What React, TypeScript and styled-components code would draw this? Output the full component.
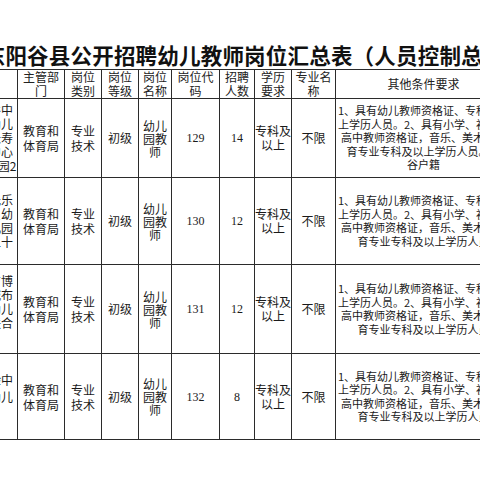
import React from 'react';
import styled, { createGlobalStyle } from 'styled-components';

/***** STYLES *****/
const GlobalStyle = createGlobalStyle`
    html, body {
        margin: 0;
        padding: 0;
        background: #ffffff;
        overflow: hidden;
    }
`;

const Page = styled.div`
    width: 480px;
    height: 480px;
    padding-top: 44px;
    box-sizing: border-box;
    overflow: hidden;
    font-family: "Noto Sans CJK SC", "Liberation Sans", sans-serif;
    color: #1a1a1a;
`;

const Title = styled.h1`
    margin: 0 0 4px -38px;
    font-size: 21.5px;
    line-height: 21px;
    letter-spacing: 0.2px;
    font-weight: 700;
    white-space: nowrap;
    color: #111;
`;

const Sheet = styled.table`
    margin-left: -28px;
    width: 539px;
    border-collapse: collapse;
    table-layout: fixed;
`;

const Row = styled.tr<{ $h: number }>`
    height: ${(p) => p.$h}px;
`;

const HeadCell = styled.th`
    border: 1px solid #2b2b2b;
    padding: 0;
    font-size: 12px;
    line-height: 14px;
    font-weight: 400;
    text-align: center;
    vertical-align: middle;
    color: #222;
`;

const Cell = styled.td<{ $lh?: number; $serif?: boolean; $size?: number }>`
    border: 1px solid #2b2b2b;
    padding: 0;
    font-size: ${(p) => p.$size || 12}px;
    line-height: ${(p) => p.$lh || 14}px;
    font-family: ${(p) => (p.$serif ? '"Liberation Serif", serif' : 'inherit')};
    text-align: center;
    vertical-align: middle;
    white-space: nowrap;
    overflow: hidden;
`;

const Line = styled.div`
    display: block;
`;

/***** DATA *****/
const widths = [45, 47, 37, 37, 33, 48, 35, 37, 44, 176];

const heads = [
    [''],
    ['主管部', '门'],
    ['岗位', '类别'],
    ['岗位', '等级'],
    ['岗位', '名称'],
    ['岗位代', '码'],
    ['招聘', '人数'],
    ['学历', '要求'],
    ['专业名', '称'],
    ['其他条件要求'],
];

const common = [
    '1、具有幼儿教师资格证、专科及以',
    '上学历人员。2、具有小学、初中或',
    '高中教师资格证，音乐、美术、体',
];

const blank = '\u3000';

const rows = [
    {
        h: 79,
        unit: ['阳谷中', '学幼儿', '园长寿', '街中心', '幼儿园2'],
        unitLh: 14,
        code: '129',
        num: '14',
        extra: [...common, '育专业专科及以上学历人员。阳', '谷户籍'],
    },
    {
        h: 87,
        unit: ['阳光乐', '贝贝幼', '幼儿园', '第二十'],
        unitLh: 14,
        code: '130',
        num: '12',
        extra: [...common, '育专业专科及以上学历人员'],
    },
    {
        h: 89,
        unit: ['东方博', '阳城布', '店幼儿', '园联合', blank],
        unitLh: 14,
        code: '131',
        num: '12',
        extra: [...common, '育专业专科及以上学历人员'],
    },
    {
        h: 86,
        unit: [blank, '实验中', '心幼儿', blank, blank],
        unitLh: 17,
        code: '132',
        num: '8',
        extra: [...common, '育专业专科及以上学历人员'],
    },
];

const lines = (items: string[]) => items.map((t, i) => <Line key={i}>{t}</Line>);

/***** COMPONENT-FUNCTION *****/
const App = () => {
    return (
        <Page>
            <GlobalStyle />
            <Title>山东阳谷县公开招聘幼儿教师岗位汇总表（人员控制总量）</Title>
            <Sheet>
                <colgroup>
                    {widths.map((w, i) => (
                        <col key={i} style={{ width: w }} />
                    ))}
                </colgroup>
                <tbody>
                    <Row $h={28}>
                        {heads.map((hd, i) => (
                            <HeadCell key={i}>{lines(hd)}</HeadCell>
                        ))}
                    </Row>
                    {rows.map((r, i) => (
                        <Row $h={r.h} key={i}>
                            <Cell $lh={r.unitLh}>{lines(r.unit)}</Cell>
                            <Cell $lh={15}>{lines(['教育和', '体育局'])}</Cell>
                            <Cell $lh={15}>{lines(['专业', '技术'])}</Cell>
                            <Cell>初级</Cell>
                            <Cell $lh={13}>{lines(['幼儿', '园教', '师'])}</Cell>
                            <Cell $serif>{r.code}</Cell>
                            <Cell $serif>{r.num}</Cell>
                            <Cell $lh={14}>{lines(['专科及', '以上'])}</Cell>
                            <Cell>不限</Cell>
                            <Cell $size={11} $lh={13.5}>{lines(r.extra)}</Cell>
                        </Row>
                    ))}
                </tbody>
            </Sheet>
        </Page>
    );
};

/***** EXPORTS *****/
export default App;
